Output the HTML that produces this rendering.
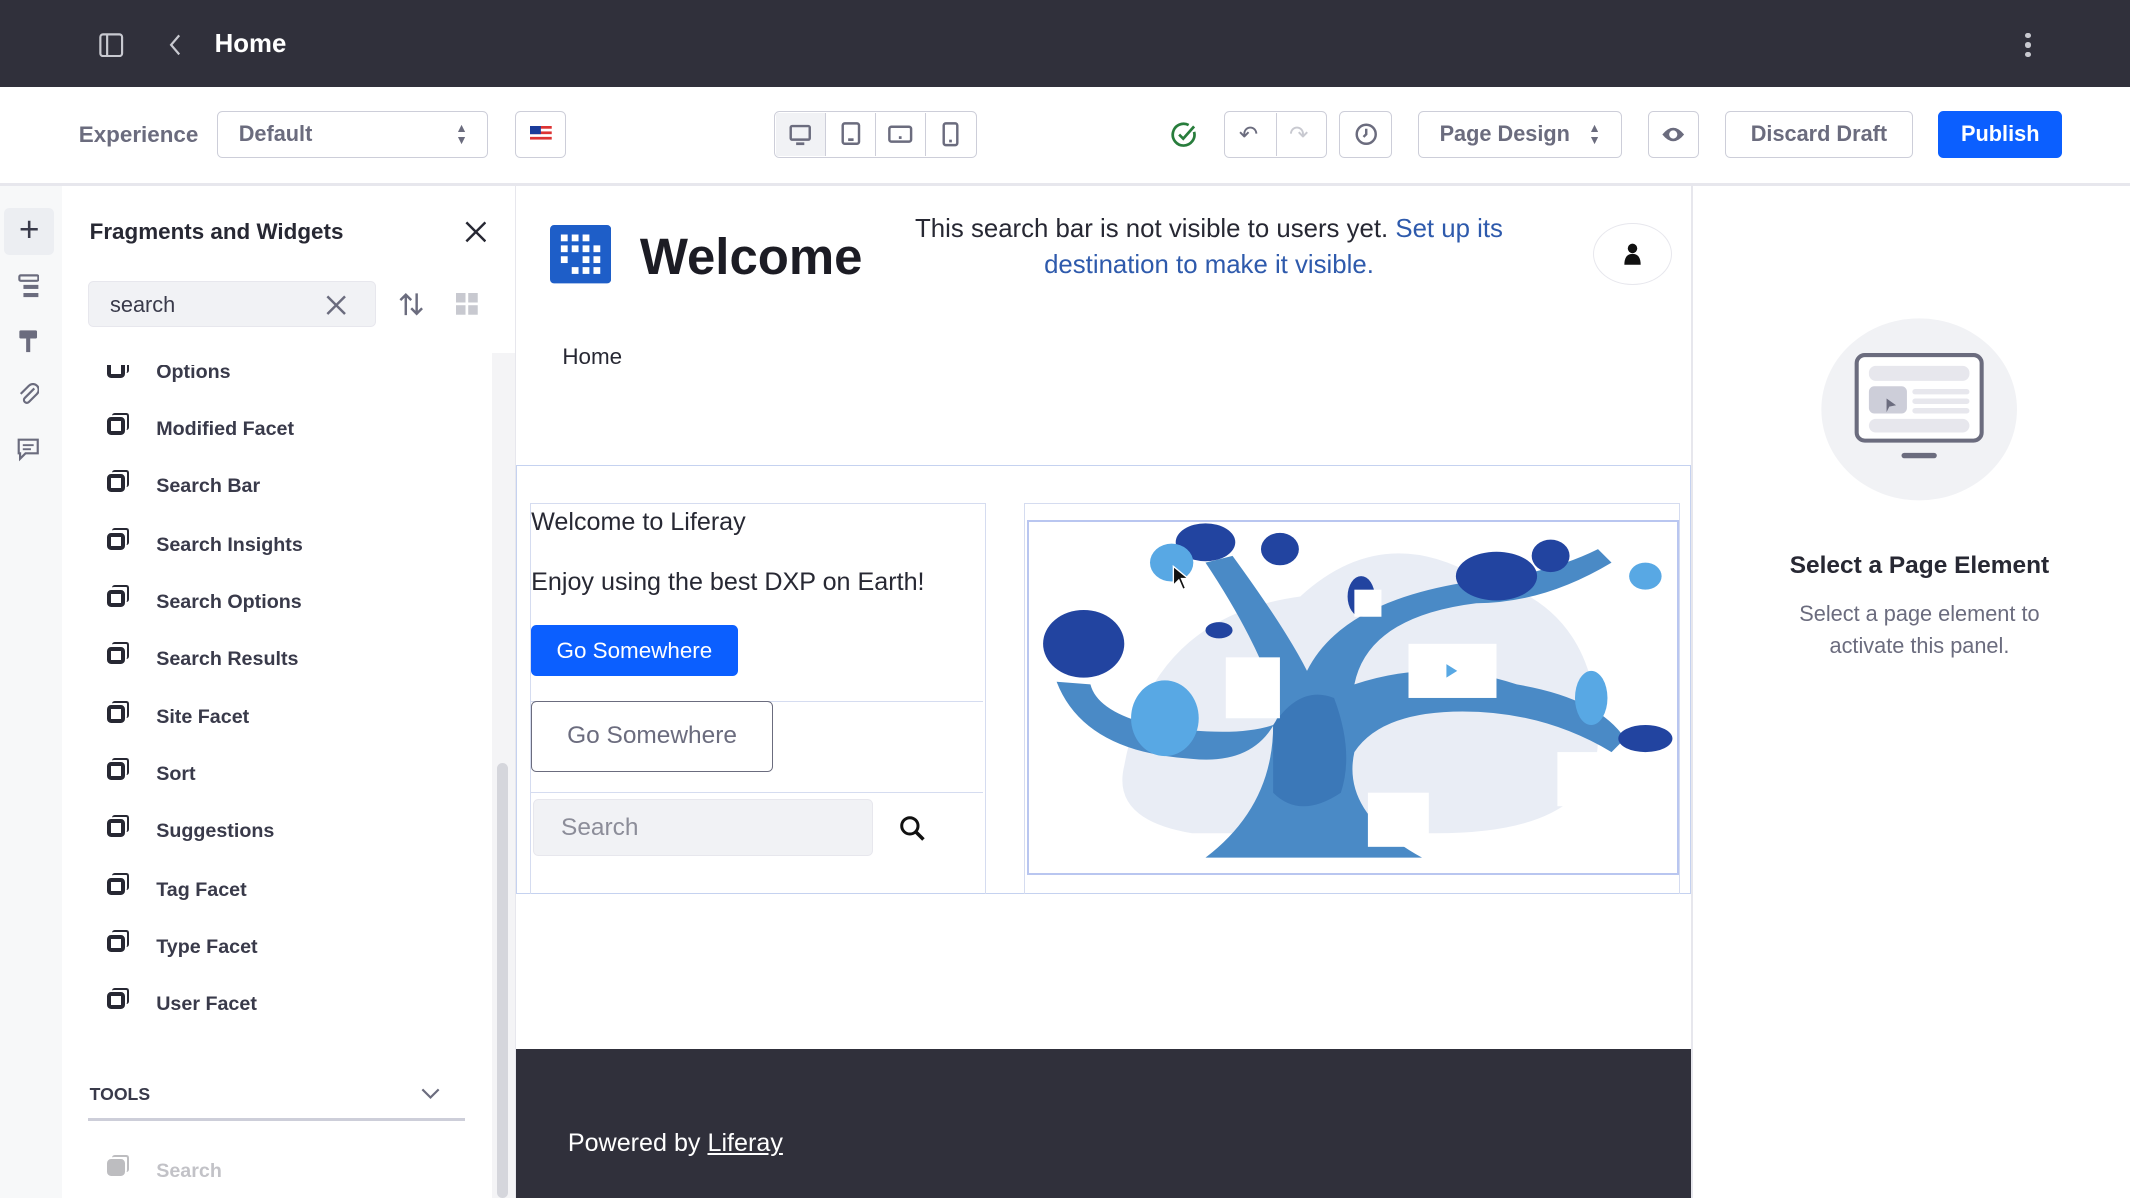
<!DOCTYPE html>
<html><head><meta charset="utf-8">
<style>
html,body{margin:0;padding:0;width:2130px;height:1198px;overflow:hidden;background:#fff}
#r{position:relative;width:1568px;height:882px;zoom:1.35842;font-family:"Liberation Sans",sans-serif;color:#272833;overflow:hidden}
.a{position:absolute}
.btn{position:absolute;border:1px solid #cdced9;border-radius:4px;background:#fff;box-sizing:border-box;display:flex;align-items:center;justify-content:center;font-size:16px;color:#6b6c7e}
.item{position:absolute;left:79px;font-size:14.5px;font-weight:bold;color:#393a4a}
.item i{position:absolute;left:0;top:-1px;width:13px;height:13px;border:3px solid #272833;border-radius:3px;box-sizing:border-box}
.item i:after{content:"";position:absolute;right:-6px;top:-6px;width:11px;height:11px;border-top:2px solid #272833;border-right:2px solid #272833;border-radius:2px}
.item span{position:absolute;left:36px;top:0;white-space:nowrap}
</style></head><body><div id="r">
<!-- top bar -->
<div class="a" style="left:0;top:0;width:1568px;height:64px;background:#30303b"></div>
<svg class="a" style="left:73px;top:24px" width="18" height="18" viewBox="0 0 18 18"><rect x="1" y="1" width="16" height="16" rx="2" fill="none" stroke="#c8c9d0" stroke-width="1.6"/><line x1="6" y1="1" x2="6" y2="17" stroke="#c8c9d0" stroke-width="1.6"/></svg>
<svg class="a" style="left:123px;top:25px" width="12" height="16"><path d="M9 1 L3 8 L9 15" fill="none" stroke="#c8c9d0" stroke-width="1.6"/></svg>
<div class="a" style="left:158px;top:22px;font-size:19px;font-weight:bold;color:#fff">Home</div>
<div class="a" style="left:1491px;top:24px;width:5px;height:18px;"><div style="width:4px;height:4px;background:#c8c9d0;border-radius:50%;margin-bottom:3px"></div><div style="width:4px;height:4px;background:#c8c9d0;border-radius:50%;margin-bottom:3px"></div><div style="width:4px;height:4px;background:#c8c9d0;border-radius:50%"></div></div>
<!-- toolbar -->
<div class="a" style="left:0;top:135px;width:1568px;height:2px;background:#e7e7ed"></div>
<div class="a" style="left:58px;top:90px;font-size:16.5px;font-weight:bold;color:#6b6c7e">Experience</div>
<div class="btn" style="left:160px;top:82px;width:199px;height:34px;justify-content:flex-start;padding-left:15px;font-weight:bold;color:#6b6c7e">Default<span style="position:absolute;right:14px;top:7px;font-size:9px;line-height:9px">▲<br>▼</span></div>
<div class="btn" style="left:379px;top:82px;width:38px;height:34px"><svg width="16" height="12"><rect width="16" height="12" fill="#fff"/><g fill="#d33"><rect y="0" width="16" height="2"/><rect y="4" width="16" height="2"/><rect y="8" width="16" height="2"/></g><rect width="8" height="6" fill="#1a3b9a"/></svg></div>
<div class="btn" style="left:570px;top:82px;width:149px;height:34px;background:#fff"></div>
<div class="a" style="left:571px;top:83px;width:36px;height:32px;background:#f1f2f5"></div>
<div class="a" style="left:607px;top:83px;width:1px;height:32px;background:#cdced9"></div>
<div class="a" style="left:644px;top:83px;width:1px;height:32px;background:#cdced9"></div>
<div class="a" style="left:681px;top:83px;width:1px;height:32px;background:#cdced9"></div>
<svg class="a" style="left:580px;top:90px" width="18" height="18"><rect x="2" y="3" width="14" height="10" rx="1" fill="none" stroke="#6b6c7e" stroke-width="1.8"/><rect x="6" y="15" width="6" height="2" fill="#6b6c7e"/></svg>
<svg class="a" style="left:618px;top:90px" width="16" height="18"><rect x="2" y="1" width="12" height="15" rx="1.5" fill="none" stroke="#6b6c7e" stroke-width="1.8"/><rect x="6" y="12" width="4" height="2" fill="#6b6c7e"/></svg>
<svg class="a" style="left:654px;top:91px" width="18" height="16"><rect x="1" y="2" width="16" height="11" rx="1.5" fill="none" stroke="#6b6c7e" stroke-width="1.8"/><rect x="8" y="9" width="2" height="2" fill="#6b6c7e"/></svg>
<svg class="a" style="left:693px;top:90px" width="14" height="18"><rect x="2" y="1" width="10" height="16" rx="1.5" fill="none" stroke="#6b6c7e" stroke-width="1.8"/><rect x="6" y="13" width="2" height="2" fill="#6b6c7e"/></svg>
<svg class="a" style="left:862px;top:89px" width="20" height="20"><path d="M17 8 A8 8 0 1 1 13 3" fill="none" stroke="#287d3c" stroke-width="2"/><path d="M6 10 L9 13 L17 4" fill="none" stroke="#287d3c" stroke-width="2"/></svg>
<div class="btn" style="left:901px;top:82px;width:76px;height:34px"></div>
<div class="a" style="left:939px;top:83px;width:1px;height:32px;background:#cdced9"></div>
<div class="a" style="left:912px;top:89px;font-size:17px;color:#6b6c7e">↶</div>
<div class="a" style="left:949px;top:89px;font-size:17px;color:#c8c9d0">↷</div>
<div class="btn" style="left:986px;top:82px;width:39px;height:34px"><svg width="18" height="18"><circle cx="9" cy="9" r="7" fill="none" stroke="#6b6c7e" stroke-width="1.8"/><path d="M9 5 V9 L7 11" fill="none" stroke="#6b6c7e" stroke-width="1.8"/></svg></div>
<div class="btn" style="left:1044px;top:82px;width:150px;height:34px;justify-content:flex-start;padding-left:15px;font-weight:bold">Page Design<span style="position:absolute;right:15px;top:7px;font-size:9px;line-height:9px">▲<br>▼</span></div>
<div class="btn" style="left:1213px;top:82px;width:38px;height:34px"><svg width="18" height="14"><path d="M1 7 Q9 -3 17 7 Q9 17 1 7Z" fill="#6b6c7e"/><circle cx="9" cy="7" r="3" fill="#fff"/></svg></div>
<div class="btn" style="left:1270px;top:82px;width:138px;height:34px;font-weight:bold">Discard Draft</div>
<div class="btn" style="left:1427px;top:82px;width:91px;height:34px;background:#0b5fff;border-color:#0b5fff;color:#fff;font-weight:bold">Publish</div>
<!-- left strip -->
<div class="a" style="left:0;top:137px;width:46px;height:745px;background:#f7f8f9"></div>
<div class="a" style="left:3px;top:153px;width:37px;height:35px;background:#eceef2;border-radius:4px;font-size:26px;line-height:33px;text-align:center;color:#393a4a">+</div>
<svg class="a" style="left:13px;top:202px" width="16" height="18"><rect x="1" y="1" width="14" height="4" rx="1" fill="none" stroke="#6b6c7e" stroke-width="1.6"/><rect x="4" y="8" width="11" height="3" fill="#6b6c7e"/><rect x="4" y="14" width="11" height="3" fill="#6b6c7e"/></svg>
<svg class="a" style="left:13px;top:242px" width="16" height="18"><rect x="1" y="1" width="13" height="6" rx="1" fill="#6b6c7e"/><rect x="6" y="7" width="3" height="10" fill="#6b6c7e"/></svg>
<svg class="a" style="left:13px;top:282px" width="16" height="18"><path d="M12 4 L5 11 A2 2 0 0 0 8 14 L14 8 A4 4 0 0 0 8 2 L2 8" fill="none" stroke="#6b6c7e" stroke-width="1.6"/></svg>
<svg class="a" style="left:12px;top:322px" width="18" height="18"><path d="M2 2 H16 V12 H7 L3 16 V12 H2Z" fill="none" stroke="#6b6c7e" stroke-width="1.6"/><line x1="5" y1="6" x2="13" y2="6" stroke="#6b6c7e" stroke-width="1.4"/><line x1="5" y1="9" x2="11" y2="9" stroke="#6b6c7e" stroke-width="1.4"/></svg>
<!-- panel -->
<div class="a" style="left:66px;top:161px;font-size:16.5px;font-weight:bold">Fragments and Widgets</div>
<svg class="a" style="left:342px;top:163px" width="16" height="16"><path d="M1 1 L15 15 M15 1 L1 15" stroke="#272833" stroke-width="1.8"/></svg>
<div class="a" style="left:65px;top:207px;width:212px;height:34px;background:#f1f2f5;border:1px solid #e7e7ed;border-radius:4px;box-sizing:border-box"></div>
<div class="a" style="left:81px;top:215px;font-size:16px;color:#393a4a">search</div>
<svg class="a" style="left:240px;top:217px" width="15" height="15"><path d="M1 1 L14 14 M14 1 L1 14" stroke="#6b6c7e" stroke-width="1.8"/></svg>
<svg class="a" style="left:294px;top:215px" width="18" height="18"><path d="M5 17 V2 M1 6 L5 2 L9 6 M13 1 V16 M9 12 L13 16 L17 12" fill="none" stroke="#6b6c7e" stroke-width="1.8"/></svg>
<svg class="a" style="left:336px;top:216px" width="17" height="17"><rect x="0" y="0" width="7" height="7" fill="#c8c9d0"/><rect x="9" y="0" width="7" height="7" fill="#c8c9d0"/><rect x="0" y="9" width="7" height="7" fill="#c8c9d0"/><rect x="9" y="9" width="7" height="7" fill="#c8c9d0"/></svg>
<div class="a" style="left:46px;top:257px;width:316px;height:12px;background:#fff;z-index:2"></div>
<div class="item" style="top:266px"><i></i><span>Options</span></div>
<div class="item" style="top:308px"><i></i><span>Modified Facet</span></div>
<div class="item" style="top:350px"><i></i><span>Search Bar</span></div>
<div class="item" style="top:393px"><i></i><span>Search Insights</span></div>
<div class="item" style="top:435px"><i></i><span>Search Options</span></div>
<div class="item" style="top:477px"><i></i><span>Search Results</span></div>
<div class="item" style="top:520px"><i></i><span>Site Facet</span></div>
<div class="item" style="top:562px"><i></i><span>Sort</span></div>
<div class="item" style="top:604px"><i></i><span>Suggestions</span></div>
<div class="item" style="top:647px"><i></i><span>Tag Facet</span></div>
<div class="item" style="top:689px"><i></i><span>Type Facet</span></div>
<div class="item" style="top:731px"><i></i><span>User Facet</span></div>
<div class="a" style="left:66px;top:798px;font-size:13px;font-weight:bold;color:#393a4a">TOOLS</div>
<svg class="a" style="left:310px;top:801px" width="14" height="9"><path d="M1 1 L7 7 L13 1" fill="none" stroke="#6b6c7e" stroke-width="1.6"/></svg>
<div class="a" style="left:65px;top:823px;width:277px;height:2px;background:#cdced9"></div>
<div class="item" style="top:854px;opacity:.3"><i style="background:#272833"></i><span>Search</span></div>
<div class="a" style="left:362px;top:260px;width:17px;height:622px;background:#f4f4f6"></div>
<div class="a" style="left:366px;top:562px;width:8px;height:320px;background:#d5d6dc;border-radius:4px"></div>
<div class="a" style="left:379px;top:137px;width:1px;height:745px;background:#e7e7ed"></div>
<!-- canvas -->
<div class="a" style="left:1245px;top:137px;width:1px;height:745px;background:#e7e7ed"></div>
<svg class="a" style="left:405px;top:166px" width="45" height="43"><rect width="45" height="43" rx="3" fill="#1e5ec8"/><g fill="#fff"><rect x="8" y="7" width="5" height="5"/><rect x="16" y="7" width="5" height="5"/><rect x="24" y="7" width="5" height="5"/><rect x="8" y="15" width="5" height="5"/><rect x="16" y="15" width="5" height="5"/><rect x="24" y="15" width="5" height="5"/><rect x="32" y="15" width="5" height="5"/><rect x="8" y="23" width="5" height="5"/><rect x="24" y="23" width="5" height="5"/><rect x="32" y="23" width="5" height="5"/><rect x="16" y="31" width="5" height="5"/><rect x="24" y="31" width="5" height="5"/><rect x="32" y="31" width="5" height="5"/></g></svg>
<div class="a" style="left:471px;top:167px;font-size:37.5px;font-weight:bold;color:#1c1c24">Welcome</div>
<div class="a" style="left:640px;top:155px;width:500px;text-align:center;font-size:19px;line-height:27px;color:#272833">This search bar is not visible to users yet. <span style="color:#2e5aac">Set up its destination to make it visible.</span></div>
<div class="a" style="left:1173px;top:164px;width:58px;height:46px;border:1px solid #e7e7ed;border-radius:50%;box-sizing:border-box"></div>
<svg class="a" style="left:1195px;top:179px" width="14" height="17"><circle cx="7" cy="4" r="3.5" fill="#111"/><path d="M1 16 Q1 8 7 8 Q13 8 13 16Z" fill="#111"/></svg>
<div class="a" style="left:414px;top:253px;font-size:16.5px">Home</div>
<div class="a" style="left:380px;top:342px;width:865px;height:316px;border:1px solid #c5d2f0;box-sizing:border-box"></div>
<div class="a" style="left:390px;top:370px;width:336px;height:288px;border:1px solid #d5dcf0;border-bottom:none;box-sizing:border-box"></div>
<div class="a" style="left:754px;top:370px;width:483px;height:288px;border:1px solid #d5dcf0;border-bottom:none;box-sizing:border-box"></div>
<div class="a" style="left:391px;top:374px;font-size:18.5px">Welcome to Liferay</div>
<div class="a" style="left:391px;top:418px;font-size:18.5px">Enjoy using the best DXP on Earth!</div>
<div class="a" style="left:391px;top:460px;width:152px;height:38px;background:#0b5fff;border-radius:4px;color:#fff;font-size:16.5px;text-align:center;line-height:38px">Go Somewhere</div>
<div class="a" style="left:391px;top:516px;width:333px;height:68px;border-top:1px solid #d5dcf0;border-bottom:1px solid #d5dcf0;box-sizing:border-box"></div>
<div class="a" style="left:391px;top:516px;width:178px;height:52px;border:1px solid #6b6c7e;border-radius:4px;box-sizing:border-box;font-size:18px;color:#6b6c7e;text-align:center;line-height:50px">Go Somewhere</div>
<div class="a" style="left:392px;top:588px;width:251px;height:42px;background:#f1f2f5;border:1px solid #e7e7ed;border-radius:4px;box-sizing:border-box"></div>
<div class="a" style="left:413px;top:599px;font-size:18px;color:#8c8d99">Search</div>
<svg class="a" style="left:662px;top:600px" width="20" height="20"><circle cx="8" cy="8" r="6" fill="none" stroke="#111" stroke-width="2.2"/><line x1="12.5" y1="12.5" x2="18" y2="18" stroke="#111" stroke-width="2.6"/></svg>
<!-- tree illustration -->
<svg class="a" style="left:756px;top:383px;border:2px solid #b9c6f0;box-sizing:border-box" width="480" height="261" viewBox="0 0 478 259">
<path d="M70 180 Q90 70 200 55 Q260 0 330 40 Q420 60 420 160 Q420 230 300 230 L120 230 Q60 220 70 180Z" fill="#e9edf5"/>
<path d="M130 248 Q180 210 180 150 Q150 160 90 150 Q50 140 45 120 L20 118 Q40 170 120 175 Q170 180 185 140 Q170 90 130 30 L150 25 Q190 80 205 110 Q230 60 320 45 Q380 40 420 20 L430 30 Q380 60 330 60 Q250 70 240 120 Q300 100 360 120 Q420 130 440 160 L430 170 Q380 140 320 140 Q260 140 240 170 Q230 215 290 248Z" fill="#4a8ac6"/>
<path d="M180 150 Q200 120 225 130 Q240 170 230 200 Q200 220 180 200Z" fill="#3b78b8"/>
<g fill="#2244a0"><ellipse cx="40" cy="90" rx="30" ry="25"/><ellipse cx="130" cy="15" rx="22" ry="14"/><ellipse cx="185" cy="20" rx="14" ry="12"/><ellipse cx="345" cy="40" rx="30" ry="18"/><ellipse cx="385" cy="25" rx="14" ry="12"/><ellipse cx="455" cy="160" rx="20" ry="10"/><ellipse cx="245" cy="55" rx="10" ry="15"/><ellipse cx="140" cy="80" rx="10" ry="6"/></g>
<g fill="#58a8e4"><ellipse cx="105" cy="30" rx="16" ry="14"/><ellipse cx="100" cy="145" rx="25" ry="28"/><ellipse cx="455" cy="40" rx="12" ry="10"/><ellipse cx="415" cy="130" rx="12" ry="20"/></g>
<rect x="145" y="100" width="40" height="45" fill="#fff"/><rect x="280" y="90" width="65" height="40" fill="#fff"/><path d="M308 105 L316 110 L308 115Z" fill="#58a8e4"/>
<rect x="250" y="200" width="45" height="40" fill="#fff"/><rect x="240" y="50" width="20" height="20" fill="#fff"/><rect x="20" y="160" width="20" height="25" fill="#fff"/><rect x="390" y="170" width="30" height="40" fill="#fff"/>
</svg>
<svg class="a" style="left:863px;top:416px" width="14" height="20"><path d="M1 1 L1 15 L5 11 L8 18 L10 17 L7 10 L12 10Z" fill="#111" stroke="#fff" stroke-width="1"/></svg>
<!-- footer -->
<div class="a" style="left:380px;top:772px;width:865px;height:110px;background:#30303b"></div>
<div class="a" style="left:418px;top:831px;font-size:18.5px;color:#fff">Powered by <span style="text-decoration:underline">Liferay</span></div>
<!-- right panel -->
<svg class="a" style="left:1340px;top:233px" width="146" height="136"><ellipse cx="73" cy="68" rx="72" ry="67" fill="#f1f2f5"/><rect x="27" y="28" width="92" height="63" rx="6" fill="#fff" stroke="#6b6c7e" stroke-width="3"/><rect x="36" y="36" width="74" height="11" rx="5" fill="#e7e7ed"/><rect x="36" y="51" width="28" height="20" rx="4" fill="#cdced9"/><rect x="68" y="53" width="42" height="4" rx="2" fill="#e7e7ed"/><rect x="68" y="60" width="42" height="4" rx="2" fill="#e7e7ed"/><rect x="68" y="67" width="42" height="4" rx="2" fill="#e7e7ed"/><rect x="36" y="75" width="74" height="10" rx="5" fill="#e7e7ed"/><path d="M49 60 L56 65 L51 66 L49 70Z" fill="#6b6c7e"/><rect x="60" y="100" width="26" height="4" rx="2" fill="#6b6c7e"/></svg>
<div class="a" style="left:1246px;top:406px;width:334px;text-align:center;font-size:18px;font-weight:bold">Select a Page Element</div>
<div class="a" style="left:1246px;top:440px;width:334px;text-align:center;font-size:16px;line-height:24px;color:#6b6c7e">Select a page element to<br>activate this panel.</div>
</div></body></html>
